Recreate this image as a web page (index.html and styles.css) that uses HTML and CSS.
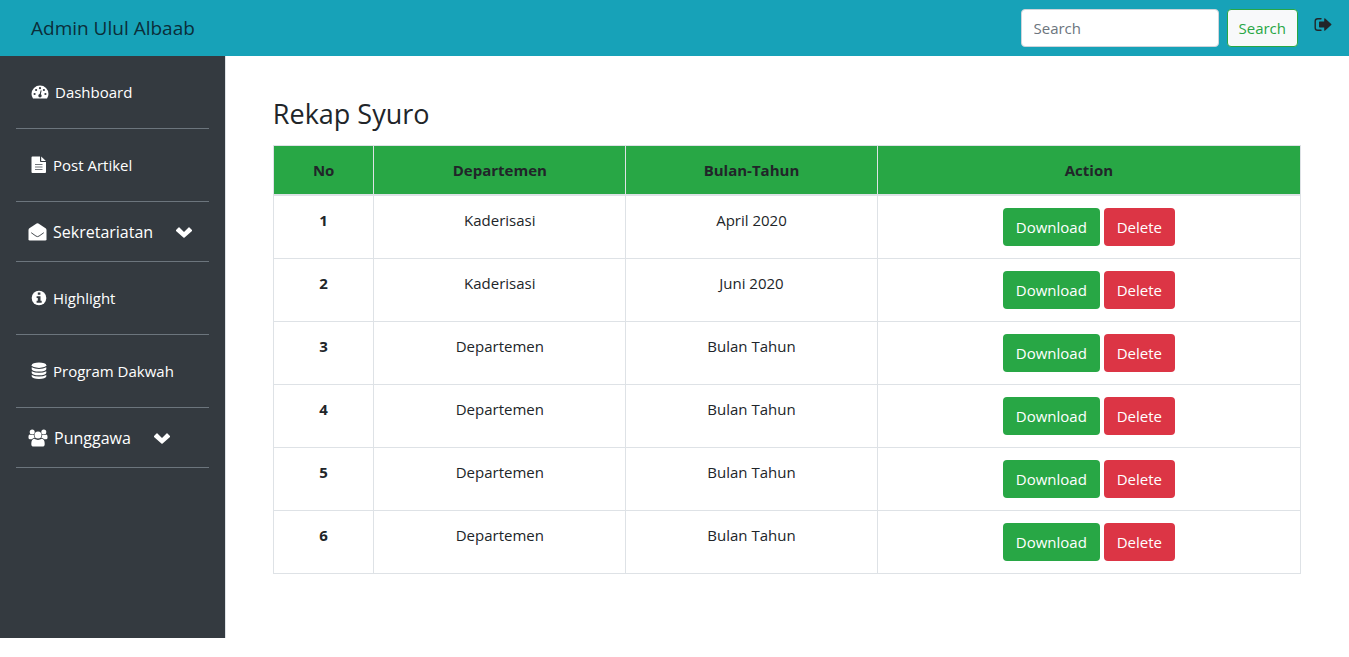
FILE: index.html
```html
<!DOCTYPE html>
<html lang="id">
<head>
<meta charset="utf-8">
<title>Rekap Syuro</title>
<link rel="stylesheet" href="styles.css">
</head>
<body>
<header class="navbar">
  <a class="brand" href="#">Admin Ulul Albaab</a>
  <form class="search">
    <input class="search-input" type="search" placeholder="Search" aria-label="Search">
    <button class="btn btn-search" type="button">Search</button>
  </form>
  <a class="logout" href="#" aria-label="Logout">
    <svg width="18" height="16" viewBox="0 0 18 16"><path d="M7 1.7H3.8Q1.2 1.7 1.2 4.3v6.4q0 2.6 2.6 2.6H7" fill="none" stroke="currentColor" stroke-width="1.4" stroke-linecap="round"/><path d="M5 5.3q0-.8.8-.8h4.4V2q0-1.4 1-.5l6 5.400q.7.600 0 1.200l-6 5.400q-1 .9-1-.5v-2.500H5.800q-.8 0-.8-.8z" fill="currentColor"/></svg>
  </a>
</header>
<div class="layout">
  <nav class="sidebar">
    <ul class="menu">
      <li class="item"><a class="link" href="#">
        <svg width="18" height="16" viewBox="0 0 18 16"><path d="M2 14.600Q.5 12.500.5 10a8.500 8.500 0 0 1 17 0q0 2.500-1.500 4.600z" fill="currentColor"/><g fill="#343a40"><circle cx="3.600" cy="10" r="1.100"/><circle cx="5.100" cy="6" r="1.100"/><circle cx="9" cy="4.200" r="1.100"/><circle cx="12.900" cy="6" r="1.100"/><circle cx="14.400" cy="10" r="1.100"/><circle cx="9" cy="11.700" r="1.700"/><path d="M8.400 11 9.700 6.300l.9.300-1 4.700z"/></g></svg>
        <span>Dashboard</span></a></li>
      <li class="item"><a class="link" href="#">
        <svg width="16" height="18" viewBox="0 0 16 18"><path d="M1.400.500h7.600v4.600q0 .9.900.9h5.100v10.100q0 .9-.9.900H1.400q-.9 0-.9-.9V1.400q0-.9.900-.9z" fill="currentColor"/><path d="M10.200.600 14.900 4.900h-4.700z" fill="currentColor"/><path d="M4 8.500h7.500M4 11h7.500M4 13.500h7.500" stroke="#343a40" stroke-width=".7"/></svg>
        <span>Post Artikel</span></a></li>
      <li class="item"><button class="toggle" type="button">
        <svg width="19" height="18" viewBox="0 0 19 18"><path d="M.5 7Q.5 6 1.400 5.300L7.800.900Q9.500-.2 11.200.900l6.400 4.400q.9.700.9 1.700v9.200q0 1.300-1.300 1.300H1.800Q.5 17.500.5 16.200z" fill="currentColor"/><path d="M3.200 9.700 8 13.100q1.500 1 3 0l4.800-3.400" fill="none" stroke="#343a40" stroke-width=".9"/></svg>
        <span>Sekretariatan</span>
        <svg class="chevron" width="16" height="13" viewBox="0 -2 16 13"><path d="M0 3.100 2.500.600Q3 .1 3.500.600L8 5.100 12.500.600q.5-.5 1 0L16 3.100q.3.400 0 .8L8.600 10.600q-.6.500-1.200 0L0 3.900q-.3-.4 0-.8z" fill="currentColor"/></svg>
      </button></li>
      <li class="item"><a class="link" href="#">
        <svg width="16" height="16" viewBox="0 0 16 16"><circle cx="8" cy="8" r="7.300" fill="currentColor"/><path d="M6.800 2.600h2.600v2.200H6.800zM5.600 6.200h3.900v4.600h1.200v1.900H5.600v-1.900h1.200V8.100H5.600z" fill="#343a40"/></svg>
        <span>Highlight</span></a></li>
      <li class="item"><a class="link" href="#">
        <svg width="16" height="18" viewBox="0 0 16 18"><g fill="currentColor"><ellipse cx="8" cy="3.200" rx="7.300" ry="2.700"/><path d="M.7 5.300q3 1.700 7.300 1.700t7.300-1.700v1.900Q14.500 9.500 8 9.500T.7 7.200z"/><path d="M.7 9.200q3 1.500 7.300 1.500t7.300-1.500v1.700q-.8 2.300-7.300 2.300T.7 10.900z"/><path d="M.7 12.900q3 1.500 7.300 1.500t7.300-1.500v1.700Q14.500 17 8 17T.7 14.600z"/></g></svg>
        <span>Program Dakwah</span></a></li>
      <li class="item"><button class="toggle" type="button">
        <svg width="20" height="18" viewBox="0 0 20 18"><g fill="currentColor"><circle cx="4.200" cy="2.900" r="2.500"/><circle cx="15.800" cy="2.900" r="2.500"/><circle cx="10" cy="6" r="3.500"/><path d="M.5 7.500q0-2 1.400-2.100 2 1 3.900.3 0 2 .9 3.300-1.800 0-2.800 1.300H2Q.5 10.300.5 8.800zM19.500 7.500q0-2-1.400-2.100-2 1-3.900.3 0 2-.9 3.300 1.800 0 2.800 1.300H18q1.500 0 1.500-1.500z"/><path d="M6.200 9.800q3.800 2.200 7.600 0 2.900.2 2.900 5.200 0 2.600-2.400 2.600H5.700q-2.400 0-2.400-2.600 0-5 2.900-5.200z"/></g></svg>
        <span>Punggawa</span>
        <svg class="chevron" width="16" height="13" viewBox="0 -2 16 13"><path d="M0 3.100 2.500.600Q3 .1 3.500.600L8 5.100 12.500.600q.5-.5 1 0L16 3.100q.3.400 0 .8L8.600 10.600q-.6.500-1.200 0L0 3.900q-.3-.4 0-.8z" fill="currentColor"/></svg>
      </button></li>
    </ul>
  </nav>
  <main class="content">
    <h1 class="title">Rekap Syuro</h1>
    <table class="table">
      <colgroup><col class="col-no"><col class="col-dept"><col class="col-month"><col></colgroup>
      <thead><tr><th scope="col">No</th><th scope="col">Departemen</th><th scope="col">Bulan-Tahun</th><th scope="col">Action</th></tr></thead>
      <tbody>
        <tr><th scope="row">1</th><td>Kaderisasi</td><td>April 2020</td><td><button class="btn btn-download" type="button">Download</button> <button class="btn btn-delete" type="button">Delete</button></td></tr>
        <tr><th scope="row">2</th><td>Kaderisasi</td><td>Juni 2020</td><td><button class="btn btn-download" type="button">Download</button> <button class="btn btn-delete" type="button">Delete</button></td></tr>
        <tr><th scope="row">3</th><td>Departemen</td><td>Bulan Tahun</td><td><button class="btn btn-download" type="button">Download</button> <button class="btn btn-delete" type="button">Delete</button></td></tr>
        <tr><th scope="row">4</th><td>Departemen</td><td>Bulan Tahun</td><td><button class="btn btn-download" type="button">Download</button> <button class="btn btn-delete" type="button">Delete</button></td></tr>
        <tr><th scope="row">5</th><td>Departemen</td><td>Bulan Tahun</td><td><button class="btn btn-download" type="button">Download</button> <button class="btn btn-delete" type="button">Delete</button></td></tr>
        <tr><th scope="row">6</th><td>Departemen</td><td>Bulan Tahun</td><td><button class="btn btn-download" type="button">Download</button> <button class="btn btn-delete" type="button">Delete</button></td></tr>
      </tbody>
    </table>
  </main>
</div>
</body>
</html>
```
FILE: styles.css
```css
* { box-sizing: border-box; }

body {
  margin: 0;
  background: #fff;
  color: #212529;
  font: 15px/24px "Open Sans", "Noto Sans", sans-serif;
}

a { color: inherit; text-decoration: none; }
button, input { font: inherit; }

.navbar {
  display: flex;
  align-items: center;
  height: 56px;
  padding: 0 17px 0 31px;
  background: #17a2b8;
}
.brand {
  margin-right: auto;
  color: #0b2e3a;
  font-size: 19px;
  line-height: 30px;
}
.search { display: flex; gap: 8px; }
.search-input {
  width: 198px;
  height: 38px;
  padding: 6px 12px;
  border: 1px solid #ced4da;
  border-radius: 4px;
  background: #fff;
  color: #495057;
}
.search-input::placeholder { color: #6c757d; opacity: 1; }
.logout {
  display: flex;
  margin: 0 0 6px 16px;
}

.btn {
  height: 38px;
  padding: 0 12px;
  border: 1px solid transparent;
  border-radius: 4px;
  color: #fff;
}
.btn-search {
  padding: 0 11px;
  background: #f8f9fa;
  border-color: #28a745;
  color: #28a745;
}
.btn-download { background: #28a745; }
.btn-delete { background: #dc3545; }

.layout {
  display: grid;
  grid-template-columns: 1fr 5fr;
}
.sidebar {
  padding: 0 16px;
  background: #343a40;
  color: #fff;
}
.menu {
  margin: 0;
  padding: 0;
  list-style: none;
}
.item {
  padding: 16px 0;
  border-bottom: 1px solid #6c757d;
}
.link {
  display: flex;
  align-items: center;
  gap: 6px;
  height: 40px;
  padding: 0 15px;
}
.toggle {
  display: flex;
  align-items: center;
  gap: 6px;
  height: 27px;
  padding: 0 12px;
  border: 0;
  background: none;
  color: inherit;
  font-size: 16px;
}
.chevron { margin-left: 17px; }

.content {
  min-width: 0;
  padding: 40px 48px 48px 47px;
  border-left: 1px solid #dee2e6;
}
.title {
  margin: 0 0 13px;
  font-size: 27px;
  font-weight: 500;
  line-height: 36px;
}
.table {
  width: 100%;
  margin-bottom: 16px;
  border-collapse: collapse;
  table-layout: fixed;
  text-align: center;
}
.col-no { width: 9.8%; }
.col-dept, .col-month { width: 24.5%; }
.table th, .table td {
  padding: 12px;
  border: 1px solid #dee2e6;
  vertical-align: top;
}
.table thead th {
  border-bottom-width: 2px;
  background: #28a745;
}
```
